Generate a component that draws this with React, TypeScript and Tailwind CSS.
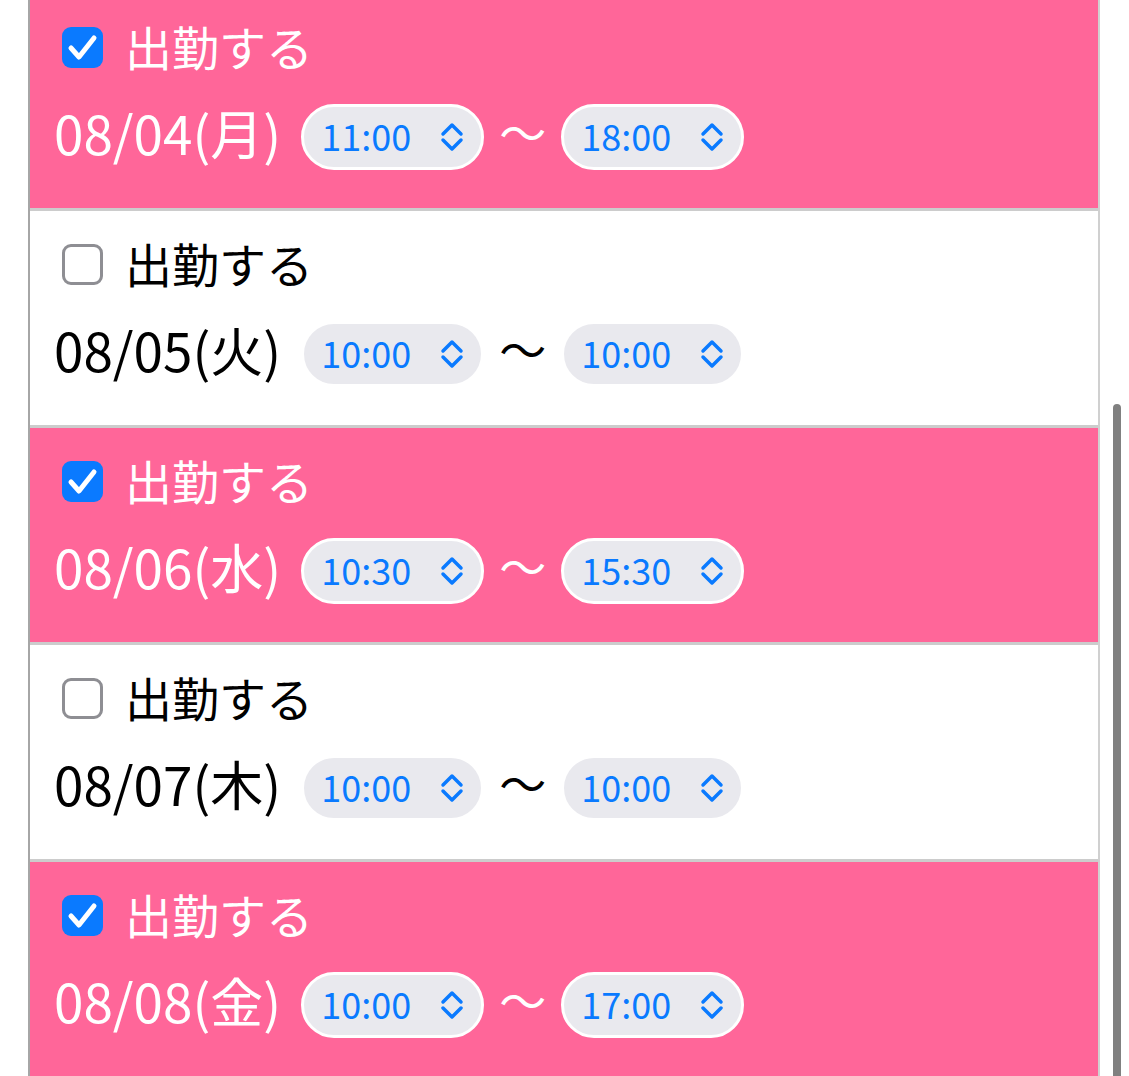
import React from 'react';

type Day = {
  date: string;
  on: boolean;
  from: string;
  to: string;
};

const days: Day[] = [
  { date: '08/04(月)', on: true, from: '11:00', to: '18:00' },
  { date: '08/05(火)', on: false, from: '10:00', to: '10:00' },
  { date: '08/06(水)', on: true, from: '10:30', to: '15:30' },
  { date: '08/07(木)', on: false, from: '10:00', to: '10:00' },
  { date: '08/08(金)', on: true, from: '10:00', to: '17:00' },
];

function Chevrons() {
  return (
    <svg width="24" height="30" viewBox="0 0 24 30" fill="none" stroke="#0a7aff" strokeWidth="3.5" strokeLinecap="round" strokeLinejoin="round">
      <path d="M3 12 L12 3 L21 12" />
      <path d="M3 18 L12 27 L21 18" />
    </svg>
  );
}

function TimeSelect({ value }: { value: string }) {
  return (
    <div className="flex h-[66px] w-[183px] items-center justify-between rounded-full border-[3px] border-white bg-[#e9e9ee] pl-[17px] pr-[17px]">
      <span className="pb-[4px] text-[36px] leading-none text-[#0a7aff]">{value}</span>
      <Chevrons />
    </div>
  );
}

function Checkbox({ checked }: { checked: boolean }) {
  if (checked) {
    return (
      <div className="flex h-[41px] w-[41px] items-center justify-center rounded-[9px] bg-[#0a7aff]">
        <svg width="41" height="41" viewBox="0 0 41 41" fill="none" stroke="white" strokeWidth="5" strokeLinecap="round" strokeLinejoin="round">
          <path d="M9 21 L17 30 L32 11" />
        </svg>
      </div>
    );
  }
  return <div className="h-[41px] w-[41px] rounded-[9px] border-[3px] border-[#8e8e93] bg-white" />;
}

function DayRow({ day }: { day: Day }) {
  const text = day.on ? 'text-white' : 'text-black';
  return (
    <div className={`flex h-[217px] flex-col border-b-[3px] border-[#cccccc] ${day.on ? 'bg-[#ff6699]' : 'bg-white'}`}>
      <div className="mt-[29px] flex h-[48px] items-center gap-[22px] pl-[32px]">
        <Checkbox checked={day.on} />
        <span className={`pb-[4px] text-[47px] leading-none ${text}`}>出勤する</span>
      </div>
      <div className="mt-[33px] flex items-center pl-[24px]">
        <span className={`mr-[20px] pb-[9px] text-[53px] leading-none ${text}`}>{day.date}</span>
        <TimeSelect value={day.from} />
        <span className={`mx-[15px] pb-[14px] text-[47px] leading-none ${text}`}>〜</span>
        <TimeSelect value={day.to} />
      </div>
    </div>
  );
}

export default function App() {
  return (
    <div
      className="relative h-[1076px] w-[1129px] overflow-hidden bg-white"
      style={{ fontFamily: '"Noto Sans CJK JP", "Noto Sans", sans-serif' }}
    >
      <div className="ml-[28px] mt-[-6px] w-[1072px] border-l-2 border-r-2 border-l-[#a6a6a6] border-r-[#d0d0d0]">
        {days.map((d) => (
          <DayRow key={d.date} day={d} />
        ))}
      </div>
      <div className="absolute left-[1113px] top-[404px] h-[700px] w-[8px] rounded-full bg-[#808080]" />
    </div>
  );
}
